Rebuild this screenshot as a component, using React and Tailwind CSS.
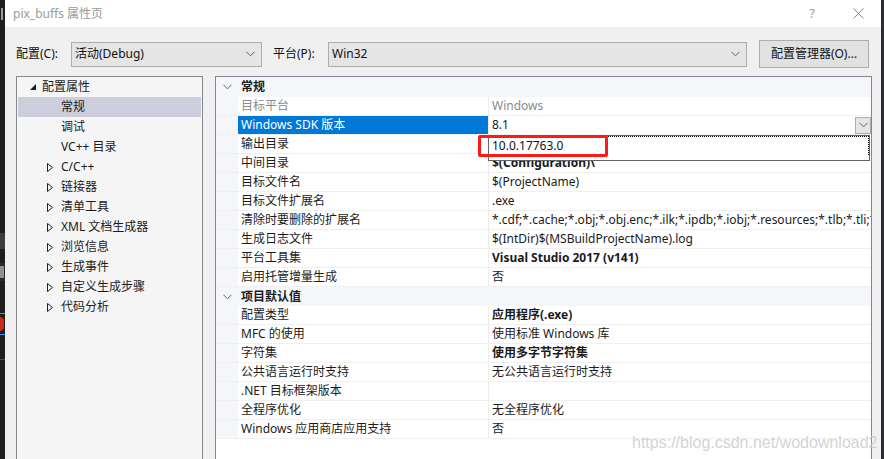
import React from 'react'

const font = { fontFamily: '"Noto Sans", "Noto Sans CJK SC", sans-serif' }

const treeItems = [
  { label: '常规', arrow: false, active: true },
  { label: '调试', arrow: false },
  { label: 'VC++ 目录', arrow: false },
  { label: 'C/C++', arrow: true },
  { label: '链接器', arrow: true },
  { label: '清单工具', arrow: true },
  { label: 'XML 文档生成器', arrow: true },
  { label: '浏览信息', arrow: true },
  { label: '生成事件', arrow: true },
  { label: '自定义生成步骤', arrow: true },
  { label: '代码分析', arrow: true },
]

const general = [
  { name: '目标平台', value: 'Windows', disabled: true },
  { name: 'Windows SDK 版本', value: '8.1', selected: true },
  { name: '输出目录', value: '$(SolutionDir)$(Configuration)\\', bold: true },
  { name: '中间目录', value: '$(Configuration)\\', bold: true },
  { name: '目标文件名', value: '$(ProjectName)' },
  { name: '目标文件扩展名', value: '.exe' },
  {
    name: '清除时要删除的扩展名',
    value: '*.cdf;*.cache;*.obj;*.obj.enc;*.ilk;*.ipdb;*.iobj;*.resources;*.tlb;*.tli;*.tlh;*.tmp;*.rsp',
  },
  { name: '生成日志文件', value: '$(IntDir)$(MSBuildProjectName).log' },
  { name: '平台工具集', value: 'Visual Studio 2017 (v141)', bold: true },
  { name: '启用托管增量生成', value: '否' },
]

const defaults = [
  { name: '配置类型', value: '应用程序(.exe)', bold: true },
  { name: 'MFC 的使用', value: '使用标准 Windows 库' },
  { name: '字符集', value: '使用多字节字符集', bold: true },
  { name: '公共语言运行时支持', value: '无公共语言运行时支持' },
  { name: '.NET 目标框架版本', value: '' },
  { name: '全程序优化', value: '无全程序优化' },
  { name: 'Windows 应用商店应用支持', value: '否' },
]

const Chevron = ({ className = '' }) => (
  <svg width="9" height="6" viewBox="0 0 9 6" className={className}>
    <path d="M0.5 0.8 L4.5 4.8 L8.5 0.8" fill="none" stroke="#606060" strokeWidth="1" />
  </svg>
)

const Select = ({ value, width }) => (
  <div
    className={`${width} h-[25px] bg-[#e5e5e5] border border-[#adadad] flex items-center justify-between pl-[3px] pr-[6px] text-[12px] text-[#111]`}
  >
    <span>{value}</span>
    <Chevron />
  </div>
)

const TreeRow = ({ item }) => (
  <div
    className={`h-[20px] flex items-center pl-[29px] text-[12px] text-[#1b1b1b] ${item.active ? 'bg-[#cccedb]' : ''}`}
  >
    <span className="w-[14px] flex items-center">
      {item.arrow && (
        <svg width="6" height="9" viewBox="0 0 6 9">
          <path d="M0.5 0.5 L5.5 4.5 L0.5 8.5 Z" fill="none" stroke="#1e1e1e" strokeWidth="1" />
        </svg>
      )}
    </span>
    <span>{item.label}</span>
  </div>
)

const Category = ({ title, tall }) => (
  <div className={`${tall ? 'h-[20px]' : 'h-[19px]'} bg-[#f4f6fa] flex items-center`}>
    <span className="w-[22px] flex justify-center">
      <Chevron />
    </span>
    <span className="pl-[3px] font-bold text-[12px] text-[#1b1b1b]">{title}</span>
  </div>
)

const PropRow = ({ row }) => (
  <div className="h-[19px] flex border-b border-[#f0f0f0]">
    <div className="w-[22px] bg-[#f4f6fa]" />
    <div
      className={`w-[251px] border-r border-[#ececec] flex items-center pl-[3px] text-[12px] whitespace-nowrap overflow-hidden ${
        row.selected ? 'bg-[#0078d7] text-white' : row.disabled ? 'text-[#8a8a8a]' : 'text-[#1b1b1b]'
      }`}
    >
      {row.name}
    </div>
    <div
      className={`flex-1 min-w-0 flex items-center justify-between pl-[3px] text-[12px] whitespace-nowrap overflow-hidden ${
        row.disabled ? 'text-[#8a8a8a]' : 'text-[#1b1b1b]'
      } ${row.bold ? 'font-bold' : ''}`}
    >
      <span>{row.value}</span>
      {row.selected && (
        <span className="w-[16px] h-[17px] shrink-0 bg-[#e5e5e5] border border-[#adadad] flex items-center justify-center">
          <Chevron />
        </span>
      )}
    </div>
  </div>
)

export default function App() {
  return (
    <div className="w-[884px] h-[459px] flex overflow-hidden bg-[#1e1e1e]" style={font}>
      {/* VS background peeking on the left */}
      <div className="w-[5px] flex flex-col bg-[#1e1e1e]">
        <div className="h-[27px] flex items-center">
          <span className="w-[2px] h-[12px] ml-[1px] bg-[#9a9a9a]" />
        </div>
        <div className="h-[206px]" />
        <div className="h-[16px] bg-[#3c3c40]" />
        <div className="h-[14px]" />
        <div className="h-[18px] bg-[#2a2a2e] flex items-center">
          <span className="w-[4px] h-[12px] bg-[#8e8e8e]" />
        </div>
        <div className="h-[32px]" />
        <div className="h-[1px] bg-[#3794ff]" />
        <div className="h-[20px] flex items-center">
          <span className="w-[4px] h-[14px] rounded-r-full bg-[#c8281e]" />
        </div>
        <div className="h-[1px] bg-[#3794ff]" />
        <div className="h-[24px]" />
        <div className="h-[1px] bg-[#4a4a4a]" />
      </div>

      {/* Dialog */}
      <div className="w-[876px] flex flex-col bg-[#f0f0f0]">
        <div className="h-[27px] bg-white flex items-center pl-[8px] pr-[17px]">
          <span className="text-[12px] text-[#9a9a9a]">pix_buffs 属性页</span>
          <span className="ml-auto text-[13px] text-[#9a9a9a] mr-[38px]">?</span>
          <svg width="11" height="11" viewBox="0 0 11 11">
            <path d="M0.5 0.5 L10.5 10.5 M10.5 0.5 L0.5 10.5" stroke="#8a8a8a" strokeWidth="1" />
          </svg>
        </div>

        <div className="flex items-center h-[28px] mt-[13px] pl-[11px]">
          <span className="w-[55px] text-[12px] text-[#111]">配置(C):</span>
          <Select value="活动(Debug)" width="w-[191px]" />
          <span className="w-[55px] ml-[11px] text-[12px] text-[#111]">平台(P):</span>
          <Select value="Win32" width="w-[419px]" />
          <button className="ml-[12px] w-[110px] h-[28px] bg-[#e1e1e1] border border-[#adadad] text-[12px] text-[#111]">
            配置管理器(O)...
          </button>
        </div>

        <div className="flex-1 flex mt-[8px] pl-[11px] gap-[12px] min-h-0">
          {/* Tree */}
          <div className="w-[187px] border-x border-t border-[#828790] bg-[#f5f5f5] px-[1px]">
            <div className="h-[20px] flex items-center pl-[12px] text-[12px] text-[#1b1b1b]">
              <span className="w-[12px] flex items-center">
                <svg width="6" height="6" viewBox="0 0 6 6">
                  <path d="M6 0 L6 6 L0 6 Z" fill="#1e1e1e" />
                </svg>
              </span>
              <span>配置属性</span>
            </div>
            {treeItems.map((item) => (
              <TreeRow key={item.label} item={item} />
            ))}
          </div>

          {/* Property grid */}
          <div className="w-[657px] border-x border-t border-[#828790] bg-white relative">
            <Category title="常规" tall />
            {general.map((row) => (
              <PropRow key={row.name} row={row} />
            ))}
            <Category title="项目默认值" />
            {defaults.map((row) => (
              <PropRow key={row.name} row={row} />
            ))}

            {/* open SDK dropdown */}
            <div className="absolute left-[272px] top-[58px] w-[382px] h-[26px] bg-white border border-[#646464]">
              <div className="h-[19px] border-t border-r border-dotted border-black flex items-center pl-[3px] text-[12px] text-[#111]">
                10.0.17763.0
              </div>
            </div>
            {/* red annotation box */}
            <div className="absolute left-[262px] top-[58px] w-[130px] h-[22px] border-[3px] border-[#ff1a1a] rounded-[2px]" />

            {/* watermark */}
            <div
              className="absolute left-[416px] top-[354px] text-[16px] text-[#c8c8c8]/80 whitespace-nowrap"
              style={{ fontFamily: '"Liberation Sans", sans-serif' }}
            >
              https://blog.csdn.net/wodownload2
            </div>
          </div>
        </div>
      </div>

      <div className="w-[3px] bg-[#2d2d30]" />
    </div>
  )
}
